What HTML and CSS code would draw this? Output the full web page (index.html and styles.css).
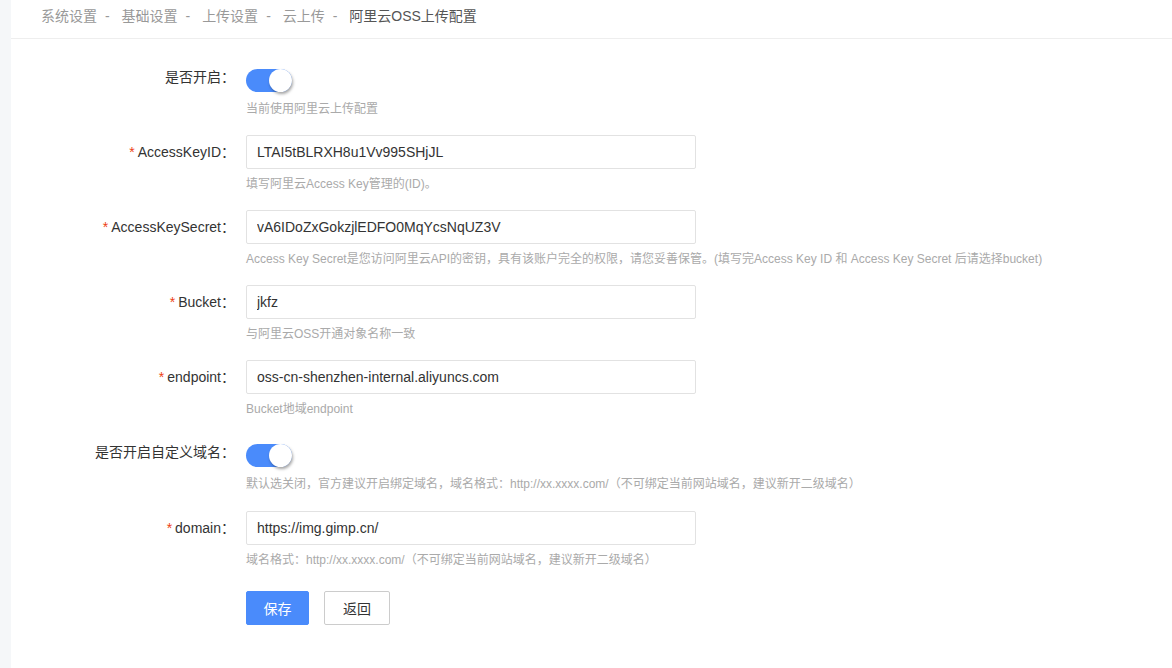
FILE: index.html
```html
<!DOCTYPE html>
<html>
<head>
  <meta charset="UTF-8">
  <title>阿里云OSS上传配置</title>
  <link rel="stylesheet" href="styles.css">
</head>
<body>
  <div class="page">
    <div class="crumbs">
      <span class="crumb">系统设置</span><span class="sep">-</span>
      <span class="crumb">基础设置</span><span class="sep">-</span>
      <span class="crumb">上传设置</span><span class="sep">-</span>
      <span class="crumb">云上传</span><span class="sep">-</span>
      <span class="crumb current">阿里云OSS上传配置</span>
    </div>

    <form class="form">
      <div class="form-item">
        <label class="label">是否开启：</label>
        <div class="field">
          <div class="control"><span class="switch on"><span class="knob"></span></span></div>
          <div class="help">当前使用阿里云上传配置</div>
        </div>
      </div>

      <div class="form-item">
        <label class="label"><span class="req">*</span>AccessKeyID：</label>
        <div class="field">
          <div class="control"><input class="input" type="text" value="LTAI5tBLRXH8u1Vv995SHjJL"></div>
          <div class="help">填写阿里云Access Key管理的(ID)。</div>
        </div>
      </div>

      <div class="form-item">
        <label class="label"><span class="req">*</span>AccessKeySecret：</label>
        <div class="field">
          <div class="control"><input class="input" type="text" value="vA6IDoZxGokzjlEDFO0MqYcsNqUZ3V"></div>
          <div class="help">Access Key Secret是您访问阿里云API的密钥，具有该账户完全的权限，请您妥善保管。(填写完Access Key ID 和 Access Key Secret 后请选择bucket)</div>
        </div>
      </div>

      <div class="form-item">
        <label class="label"><span class="req">*</span>Bucket：</label>
        <div class="field">
          <div class="control"><input class="input" type="text" value="jkfz"></div>
          <div class="help">与阿里云OSS开通对象名称一致</div>
        </div>
      </div>

      <div class="form-item">
        <label class="label"><span class="req">*</span>endpoint：</label>
        <div class="field">
          <div class="control"><input class="input" type="text" value="oss-cn-shenzhen-internal.aliyuncs.com"></div>
          <div class="help">Bucket地域endpoint</div>
        </div>
      </div>

      <div class="form-item">
        <label class="label">是否开启自定义域名：</label>
        <div class="field">
          <div class="control"><span class="switch on"><span class="knob"></span></span></div>
          <div class="help">默认选关闭，官方建议开启绑定域名，域名格式：http://xx.xxxx.com/（不可绑定当前网站域名，建议新开二级域名）</div>
        </div>
      </div>

      <div class="form-item">
        <label class="label"><span class="req">*</span>domain：</label>
        <div class="field">
          <div class="control"><input class="input" type="text" value="https://img.gimp.cn/"></div>
          <div class="help">域名格式：http://xx.xxxx.com/（不可绑定当前网站域名，建议新开二级域名）</div>
        </div>
      </div>

      <div class="actions">
        <button class="btn primary" type="button">保存</button>
        <button class="btn" type="button">返回</button>
      </div>
    </form>
  </div>
</body>
</html>
```

FILE: styles.css
```css
:root {
  --primary-blue: #4a8bfb;
  --text-primary: #333;
  --text-muted: #aaa;
  --border: #e2e2e2;
  --side-bg: #f5f7f9;
}

html, body {
  height: 100%;
}

body {
  margin: 0;
  background: var(--side-bg);
  font-family: "Liberation Sans", "Noto Sans CJK SC", sans-serif;
  color: var(--text-primary);
  font-size: 14px;
}

.page {
  margin-left: 11px;
  min-height: 100%;
  background: white;
}

.crumbs {
  height: 38px;
  line-height: 32px;
  padding-left: 30px;
  border-bottom: 1px solid #eee;
  color: #999;
  font-size: 14px;
}

.crumbs .sep {
  padding: 0 8px;
}

.crumbs .current {
  color: #555;
}

.form {
  padding-top: 21px;
}

.form-item {
  display: flex;
  margin-bottom: 16.1px;
}

.label {
  width: 224px;
  padding-right: 11px;
  text-align: right;
  line-height: 34px;
  color: var(--text-primary);
  flex-shrink: 0;
}

.req {
  color: #ed4014;
  margin-right: 3px;
}

.control {
  height: 34px;
}

.input {
  box-sizing: border-box;
  width: 450px;
  height: 34px;
  padding: 0 10px;
  border: 1px solid var(--border);
  border-radius: 2px;
  font-family: inherit;
  font-size: 14px;
  color: var(--text-primary);
  outline: none;
}

.switch {
  display: inline-block;
  position: relative;
  margin-top: 9px;
  width: 46px;
  height: 23px;
  border-radius: 12px;
  background: #d5d5d5;
}

.switch.on {
  background: var(--primary-blue);
}

.switch .knob {
  position: absolute;
  top: 0;
  left: 0;
  width: 23px;
  height: 23px;
  border-radius: 50%;
  background: white;
  box-shadow: 1px 2px 3px rgba(0, 0, 0, 0.35);
}

.switch.on .knob {
  left: 23px;
}

.help {
  margin-top: 5px;
  line-height: 20px;
  font-size: 12px;
  color: var(--text-muted);
  white-space: nowrap;
}

.actions {
  display: flex;
  gap: 15px;
  padding: 5px 0 40px 235px;
}

.btn {
  width: 66px;
  height: 34px;
  padding: 0;
  border: 1px solid #ccc;
  border-radius: 2px;
  background: white;
  font-family: inherit;
  font-size: 14px;
  color: var(--text-primary);
  text-align: center;
  cursor: pointer;
}

.btn.primary {
  width: 63px;
  border-color: var(--primary-blue);
  background: var(--primary-blue);
  color: white;
}
```
